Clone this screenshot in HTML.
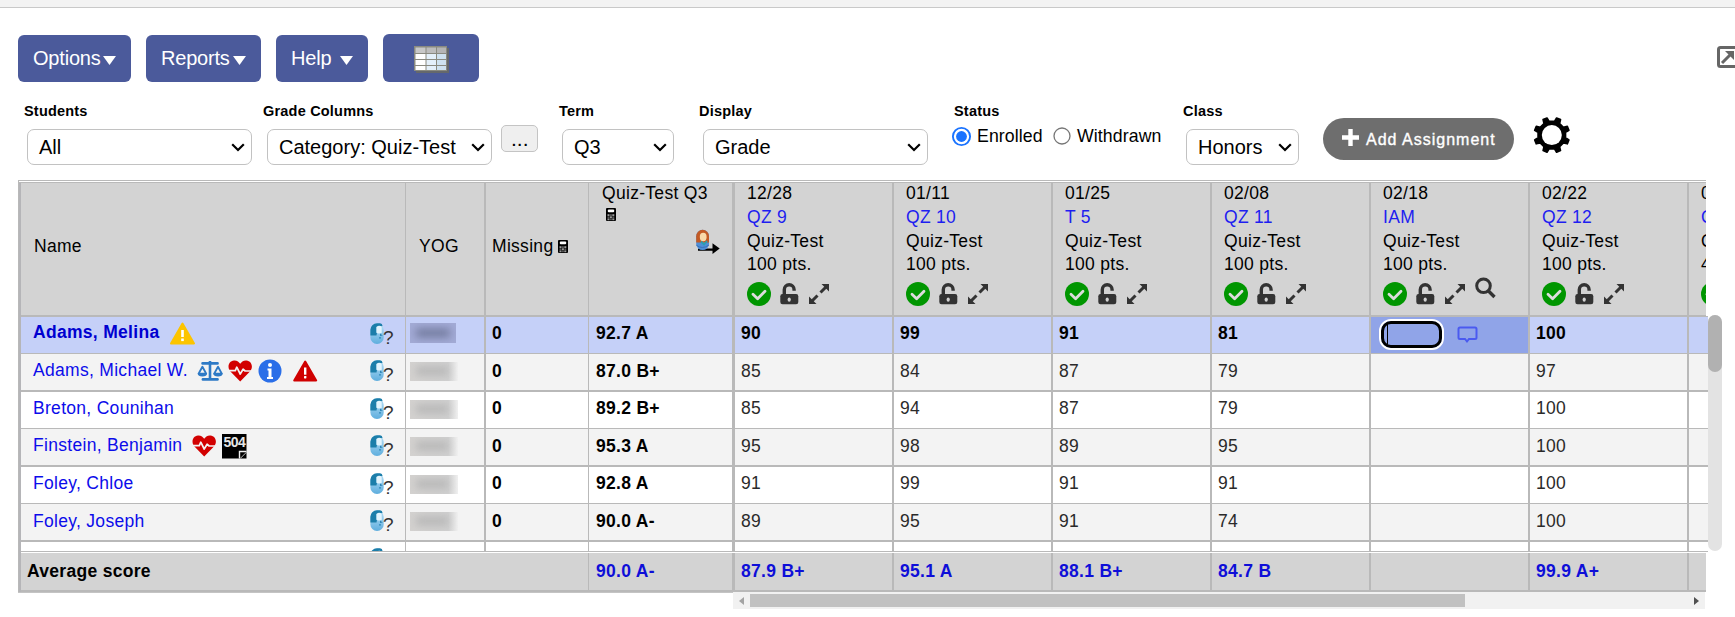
<!DOCTYPE html>
<html><head><meta charset="utf-8"><style>
html,body{margin:0;padding:0;background:#fff;width:1735px;height:617px;overflow:hidden;position:relative;font-family:"Liberation Sans", sans-serif;}
</style></head><body>
<div style="position:absolute;left:0;top:0;width:1735px;height:617px;overflow:hidden">
<div style="position:absolute;left:0px;top:0px;width:1735px;height:7px;background:#f3f3f3"></div><div style="position:absolute;left:0px;top:7px;width:1735px;height:1px;background:#c9c9c9"></div><div style="position:absolute;left:18px;top:35px;width:113px;height:47px;background:#4b5a9b;border-radius:6px"></div><div style="position:absolute;left:146px;top:35px;width:115px;height:47px;background:#4b5a9b;border-radius:6px"></div><div style="position:absolute;left:276px;top:35px;width:92px;height:47px;background:#4b5a9b;border-radius:6px"></div><div style="position:absolute;left:383px;top:34px;width:96px;height:48px;background:#4b5a9b;border-radius:6px"></div><div style="position:absolute;left:33px;top:48.00px;font-size:20px;line-height:20px;font-weight:normal;color:#fff;white-space:nowrap;letter-spacing:-0.2px">Options</div><svg style="position:absolute;left:103px;top:56px" width="13" height="9" viewBox="0 0 13 9"><path d="M0 0 L13 0 L6.5 9 Z" fill="#fff"/></svg><div style="position:absolute;left:161px;top:48.00px;font-size:20px;line-height:20px;font-weight:normal;color:#fff;white-space:nowrap;letter-spacing:-0.2px">Reports</div><svg style="position:absolute;left:233px;top:56px" width="13" height="9" viewBox="0 0 13 9"><path d="M0 0 L13 0 L6.5 9 Z" fill="#fff"/></svg><div style="position:absolute;left:291px;top:48.00px;font-size:20px;line-height:20px;font-weight:normal;color:#fff;white-space:nowrap;letter-spacing:-0.2px">Help</div><svg style="position:absolute;left:340px;top:56px" width="13" height="9" viewBox="0 0 13 9"><path d="M0 0 L13 0 L6.5 9 Z" fill="#fff"/></svg><svg style="position:absolute;left:414px;top:46px" width="36" height="28" viewBox="0 0 36 28"><rect x="2" y="2" width="33" height="25" fill="#6b6b60" opacity="0.8"/><rect x="0" y="0" width="33" height="25" fill="#8a8a80"/><rect x="1.5" y="1.5" width="10" height="5.5" fill="#c8c8c8"/><rect x="12.5" y="1.5" width="9.5" height="5.5" fill="#bdbdbd"/><rect x="23" y="1.5" width="9" height="5.5" fill="#b5b5b5"/><rect x="1.5" y="8" width="10" height="5" fill="#ffffff"/><rect x="12.5" y="8" width="9.5" height="5" fill="#e4f0fa"/><rect x="23" y="8" width="9" height="5" fill="#cfe2f0"/><rect x="1.5" y="14" width="10" height="5" fill="#ffffff"/><rect x="12.5" y="14" width="9.5" height="5" fill="#e4f0fa"/><rect x="23" y="14" width="9" height="5" fill="#cfe2f0"/><rect x="1.5" y="20" width="10" height="4" fill="#ffffff"/><rect x="12.5" y="20" width="9.5" height="4" fill="#e4f0fa"/><rect x="23" y="20" width="9" height="4" fill="#cfe2f0"/></svg><svg style="position:absolute;left:1717px;top:46px" width="18" height="23" viewBox="0 0 18 23"><rect x="1.5" y="1.5" width="22" height="19" rx="2" fill="none" stroke="#666" stroke-width="3"/><path d="M5 17 L14 8" stroke="#666" stroke-width="3"/><path d="M8 5 L17 5 L17 14 Z" fill="#666"/></svg><div style="position:absolute;left:24px;top:104.00px;font-size:14.5px;line-height:14.5px;font-weight:bold;color:#000;white-space:nowrap;letter-spacing:0.2px">Students</div><div style="position:absolute;left:263px;top:104.00px;font-size:14.5px;line-height:14.5px;font-weight:bold;color:#000;white-space:nowrap;letter-spacing:0.2px">Grade Columns</div><div style="position:absolute;left:559px;top:104.00px;font-size:14.5px;line-height:14.5px;font-weight:bold;color:#000;white-space:nowrap;letter-spacing:0.2px">Term</div><div style="position:absolute;left:699px;top:104.00px;font-size:14.5px;line-height:14.5px;font-weight:bold;color:#000;white-space:nowrap;letter-spacing:0.2px">Display</div><div style="position:absolute;left:954px;top:104.00px;font-size:14.5px;line-height:14.5px;font-weight:bold;color:#000;white-space:nowrap;letter-spacing:0.2px">Status</div><div style="position:absolute;left:1183px;top:104.00px;font-size:14.5px;line-height:14.5px;font-weight:bold;color:#000;white-space:nowrap;letter-spacing:0.2px">Class</div><div style="position:absolute;left:27px;top:129px;width:225px;height:36px;box-sizing:border-box;border:1px solid #c2c2c2;border-radius:7px;background:#fff"></div><div style="position:absolute;left:39px;top:137.00px;font-size:20px;line-height:20px;font-weight:normal;color:#000;white-space:nowrap;">All</div><svg style="position:absolute;left:231px;top:143px" width="14" height="9" viewBox="0 0 14 9"><path d="M1.2 1.2 L7 7 L12.8 1.2" fill="none" stroke="#000" stroke-width="2.2"/></svg><div style="position:absolute;left:267px;top:129px;width:225px;height:36px;box-sizing:border-box;border:1px solid #c2c2c2;border-radius:7px;background:#fff"></div><div style="position:absolute;left:279px;top:137.00px;font-size:20px;line-height:20px;font-weight:normal;color:#000;white-space:nowrap;">Category: Quiz-Test</div><svg style="position:absolute;left:471px;top:143px" width="14" height="9" viewBox="0 0 14 9"><path d="M1.2 1.2 L7 7 L12.8 1.2" fill="none" stroke="#000" stroke-width="2.2"/></svg><div style="position:absolute;left:562px;top:129px;width:112px;height:36px;box-sizing:border-box;border:1px solid #c2c2c2;border-radius:7px;background:#fff"></div><div style="position:absolute;left:574px;top:137.00px;font-size:20px;line-height:20px;font-weight:normal;color:#000;white-space:nowrap;">Q3</div><svg style="position:absolute;left:653px;top:143px" width="14" height="9" viewBox="0 0 14 9"><path d="M1.2 1.2 L7 7 L12.8 1.2" fill="none" stroke="#000" stroke-width="2.2"/></svg><div style="position:absolute;left:703px;top:129px;width:225px;height:36px;box-sizing:border-box;border:1px solid #c2c2c2;border-radius:7px;background:#fff"></div><div style="position:absolute;left:715px;top:137.00px;font-size:20px;line-height:20px;font-weight:normal;color:#000;white-space:nowrap;">Grade</div><svg style="position:absolute;left:907px;top:143px" width="14" height="9" viewBox="0 0 14 9"><path d="M1.2 1.2 L7 7 L12.8 1.2" fill="none" stroke="#000" stroke-width="2.2"/></svg><div style="position:absolute;left:1186px;top:129px;width:113px;height:36px;box-sizing:border-box;border:1px solid #c2c2c2;border-radius:7px;background:#fff"></div><div style="position:absolute;left:1198px;top:137.00px;font-size:20px;line-height:20px;font-weight:normal;color:#000;white-space:nowrap;">Honors</div><svg style="position:absolute;left:1278px;top:143px" width="14" height="9" viewBox="0 0 14 9"><path d="M1.2 1.2 L7 7 L12.8 1.2" fill="none" stroke="#000" stroke-width="2.2"/></svg><div style="position:absolute;left:501px;top:125px;width:37px;height:27px;box-sizing:border-box;border:1px solid #c4c4c4;border-radius:5px;background:#efefef"></div><div style="position:absolute;left:511px;top:128.00px;font-size:21px;line-height:21px;font-weight:normal;color:#000;white-space:nowrap;">...</div><svg style="position:absolute;left:951px;top:126px" width="21" height="21" viewBox="0 0 21 21"><circle cx="10.5" cy="10.5" r="8.6" fill="#fff" stroke="#1a73ff" stroke-width="1.9"/><circle cx="10.5" cy="10.5" r="5.4" fill="#1a73ff"/></svg><svg style="position:absolute;left:1052px;top:126px" width="20" height="20" viewBox="0 0 20 20"><circle cx="10" cy="10" r="8" fill="#fff" stroke="#767676" stroke-width="1.3"/></svg><div style="position:absolute;left:977px;top:128.00px;font-size:17.7px;line-height:17.7px;font-weight:normal;color:#000;white-space:nowrap;letter-spacing:0.1px">Enrolled</div><div style="position:absolute;left:1077px;top:128.00px;font-size:17.7px;line-height:17.7px;font-weight:normal;color:#000;white-space:nowrap;letter-spacing:0.1px">Withdrawn</div><div style="position:absolute;left:1323px;top:118px;width:191px;height:42px;background:#6e6e6e;border-radius:21px"></div><svg style="position:absolute;left:1341px;top:128px" width="20" height="18" viewBox="0 0 20 18"><path d="M9.5 1 V18 M1 9.5 H18" stroke="#fff" stroke-width="4.4"/></svg><div style="position:absolute;left:1366px;top:132.00px;font-size:16px;line-height:16px;font-weight:normal;color:#fff;white-space:nowrap;letter-spacing:1px;-webkit-text-stroke:0.35px #fff">Add Assignment</div><svg style="position:absolute;left:1532px;top:116px" width="40" height="40" viewBox="0 0 40 40"><path d="M33.54 21.78 L36.94 23.89 L35.31 27.83 L31.41 26.92 L27.62 30.71 L28.53 34.61 L24.59 36.24 L22.48 32.84 L17.12 32.84 L15.01 36.24 L11.07 34.61 L11.98 30.71 L8.19 26.92 L4.29 27.83 L2.66 23.89 L6.06 21.78 L6.06 16.42 L2.66 14.31 L4.29 10.37 L8.19 11.28 L11.98 7.49 L11.07 3.59 L15.01 1.96 L17.12 5.36 L22.48 5.36 L24.59 1.96 L28.53 3.59 L27.62 7.49 L31.41 11.28 L35.31 10.37 L36.94 14.31 L33.54 16.42 Z" fill="#000" stroke="#000" stroke-width="1.6" stroke-linejoin="round"/><circle cx="19.8" cy="19.1" r="10" fill="#fff"/></svg><div style="position:absolute;left:18px;top:180px;width:1688px;height:136px;background:#d3d3d3"></div><div style="position:absolute;left:18px;top:180px;width:1688px;height:1px;background:#b9b9b9"></div><div style="position:absolute;left:19px;top:181px;width:1687px;height:1px;background:#fff"></div><div style="position:absolute;left:18px;top:182px;width:1688px;height:1px;background:#b9b9b9"></div><div style="position:absolute;left:18px;top:315px;width:1690px;height:2px;background:#b9b9b9"></div><div style="position:absolute;left:21px;top:317px;width:1687px;height:36px;background:#c5d0f8"></div><div style="position:absolute;left:21px;top:353px;width:1687px;height:1px;background:#b9b9b9"></div><div style="position:absolute;left:21px;top:354px;width:1687px;height:36px;background:#f3f3f3"></div><div style="position:absolute;left:21px;top:390px;width:1687px;height:2px;background:#b9b9b9"></div><div style="position:absolute;left:21px;top:392px;width:1687px;height:36px;background:#ffffff"></div><div style="position:absolute;left:21px;top:428px;width:1687px;height:1px;background:#b9b9b9"></div><div style="position:absolute;left:21px;top:429px;width:1687px;height:36px;background:#f3f3f3"></div><div style="position:absolute;left:21px;top:465px;width:1687px;height:2px;background:#b9b9b9"></div><div style="position:absolute;left:21px;top:467px;width:1687px;height:36px;background:#ffffff"></div><div style="position:absolute;left:21px;top:503px;width:1687px;height:1px;background:#b9b9b9"></div><div style="position:absolute;left:21px;top:504px;width:1687px;height:36px;background:#f3f3f3"></div><div style="position:absolute;left:21px;top:540px;width:1687px;height:2px;background:#b9b9b9"></div><div style="position:absolute;left:21px;top:542px;width:1687px;height:9px;background:#ffffff"></div><div style="position:absolute;left:1371px;top:317px;width:157px;height:36px;background:#90a4e8"></div><div style="position:absolute;left:18px;top:551px;width:1690px;height:1px;background:#b9b9b9"></div><div style="position:absolute;left:18px;top:552px;width:1688px;height:1px;background:#fff"></div><div style="position:absolute;left:18px;top:553px;width:1688px;height:37px;background:#d3d3d3"></div><div style="position:absolute;left:18px;top:590px;width:1688px;height:2px;background:#b9b9b9"></div><div style="position:absolute;left:18px;top:592px;width:715px;height:1px;background:#c4c4c4"></div><div style="position:absolute;left:405px;top:183px;width:1px;height:368px;background:#b9b9b9"></div><div style="position:absolute;left:484px;top:183px;width:2px;height:368px;background:#b9b9b9"></div><div style="position:absolute;left:588px;top:183px;width:1px;height:368px;background:#b9b9b9"></div><div style="position:absolute;left:732px;top:183px;width:3px;height:368px;background:#b9b9b9"></div><div style="position:absolute;left:892px;top:183px;width:2px;height:368px;background:#b9b9b9"></div><div style="position:absolute;left:1051px;top:183px;width:2px;height:368px;background:#b9b9b9"></div><div style="position:absolute;left:1210px;top:183px;width:2px;height:368px;background:#b9b9b9"></div><div style="position:absolute;left:1369px;top:183px;width:2px;height:368px;background:#b9b9b9"></div><div style="position:absolute;left:1528px;top:183px;width:2px;height:368px;background:#b9b9b9"></div><div style="position:absolute;left:1687px;top:183px;width:2px;height:368px;background:#b9b9b9"></div><div style="position:absolute;left:588px;top:553px;width:1px;height:37px;background:#b9b9b9"></div><div style="position:absolute;left:732px;top:553px;width:3px;height:37px;background:#b9b9b9"></div><div style="position:absolute;left:892px;top:553px;width:2px;height:37px;background:#b9b9b9"></div><div style="position:absolute;left:1051px;top:553px;width:2px;height:37px;background:#b9b9b9"></div><div style="position:absolute;left:1210px;top:553px;width:2px;height:37px;background:#b9b9b9"></div><div style="position:absolute;left:1369px;top:553px;width:2px;height:37px;background:#b9b9b9"></div><div style="position:absolute;left:1528px;top:553px;width:2px;height:37px;background:#b9b9b9"></div><div style="position:absolute;left:1687px;top:553px;width:2px;height:37px;background:#b9b9b9"></div><div style="position:absolute;left:1706px;top:180px;width:2px;height:136px;background:#fff"></div><div style="position:absolute;left:18px;top:180px;width:1px;height:412px;background:#b9b9b9"></div><div style="position:absolute;left:19px;top:183px;width:2px;height:409px;background:#b5b5b8"></div><div style="position:absolute;left:1708px;top:315px;width:14px;height:236px;background:#e3e3e3;border-radius:7px"></div><div style="position:absolute;left:1708px;top:315px;width:14px;height:57px;background:#b1b1b1;border-radius:7px"></div><div style="position:absolute;left:733px;top:592px;width:972px;height:17px;background:#f1f1f1"></div><div style="position:absolute;left:750px;top:594px;width:715px;height:13px;background:#c1c1c1"></div><svg style="position:absolute;left:739px;top:597px" width="5" height="8" viewBox="0 0 5 8"><path d="M5 0 L0 4 L5 8 Z" fill="#a3a3a3"/></svg><svg style="position:absolute;left:1694px;top:597px" width="5" height="8" viewBox="0 0 5 8"><path d="M0 0 L5 4 L0 8 Z" fill="#505050"/></svg><div style="position:absolute;left:34px;top:238.00px;font-size:17.5px;line-height:17.5px;font-weight:normal;color:#000;white-space:nowrap;letter-spacing:0.3px;">Name</div><div style="position:absolute;left:419px;top:238.00px;font-size:17.5px;line-height:17.5px;font-weight:normal;color:#000;white-space:nowrap;letter-spacing:0.3px;">YOG</div><div style="position:absolute;left:492px;top:238.00px;font-size:17.5px;line-height:17.5px;font-weight:normal;color:#000;white-space:nowrap;letter-spacing:0.3px;">Missing</div><svg style="position:absolute;left:558px;top:240px" width="10" height="13" viewBox="0 0 10 13"><rect x="0" y="0" width="10" height="13" rx="1" fill="#000"/><rect x="1.8" y="1.5" width="6.4" height="2.8" rx="1" fill="#fff"/><rect x="1.5" y="6.2" width="2" height="1.8" fill="#9a9a9a"/><rect x="1.5" y="10.4" width="2" height="1.8" fill="#9a9a9a"/><rect x="3.9" y="8.3" width="2" height="1.8" fill="#9a9a9a"/><rect x="6.3" y="6.2" width="2" height="1.8" fill="#9a9a9a"/><rect x="6.3" y="10.4" width="2" height="1.8" fill="#9a9a9a"/><rect x="1.5" y="8.3" width="2" height="1.8" fill="#555"/><rect x="3.9" y="6.2" width="2" height="1.8" fill="#555"/><rect x="3.9" y="10.4" width="2" height="1.8" fill="#555"/><rect x="6.3" y="8.3" width="2" height="1.8" fill="#555"/></svg><div style="position:absolute;left:602px;top:185.00px;font-size:17.5px;line-height:17.5px;font-weight:normal;color:#000;white-space:nowrap;letter-spacing:0.3px;">Quiz-Test Q3</div><svg style="position:absolute;left:606px;top:208px" width="10" height="13" viewBox="0 0 10 13"><rect x="0" y="0" width="10" height="13" rx="1" fill="#000"/><rect x="1.8" y="1.5" width="6.4" height="2.8" rx="1" fill="#fff"/><rect x="1.5" y="6.2" width="2" height="1.8" fill="#9a9a9a"/><rect x="1.5" y="10.4" width="2" height="1.8" fill="#9a9a9a"/><rect x="3.9" y="8.3" width="2" height="1.8" fill="#9a9a9a"/><rect x="6.3" y="6.2" width="2" height="1.8" fill="#9a9a9a"/><rect x="6.3" y="10.4" width="2" height="1.8" fill="#9a9a9a"/><rect x="1.5" y="8.3" width="2" height="1.8" fill="#555"/><rect x="3.9" y="6.2" width="2" height="1.8" fill="#555"/><rect x="3.9" y="10.4" width="2" height="1.8" fill="#555"/><rect x="6.3" y="8.3" width="2" height="1.8" fill="#555"/></svg><svg style="position:absolute;left:690px;top:225px" width="32" height="32" viewBox="0 0 32 32"><path d="M8 23.5 H22.5 V18.2 L29.7 23.5 L22.5 28.9 V25.7 H8 Z" fill="#000"/><rect x="6.2" y="4.8" width="12.8" height="20.3" rx="6.4" fill="#4f8fd6"/><path d="M6.2 11.2 A6.4 6.4 0 0 1 19 11.2 V17.5 H6.2 Z" fill="#c35a24"/><ellipse cx="13.2" cy="12" rx="3.4" ry="4.2" fill="#f9d9a9"/><path d="M11 16.5 L14 19.5 L17 16" stroke="#2aa0b0" stroke-width="1.8" fill="none"/><path d="M6.2 20 Q12 25 19 20" stroke="#3a70b8" stroke-width="1" fill="none"/></svg><div style="position:absolute;left:0;top:0;width:1706px;height:617px;overflow:hidden"><div style="position:absolute;left:747px;top:185.00px;font-size:17.5px;line-height:17.5px;font-weight:normal;color:#000;white-space:nowrap;letter-spacing:0.3px;">12/28</div><div style="position:absolute;left:747px;top:209.00px;font-size:17.5px;line-height:17.5px;font-weight:normal;color:#1e1ef0;white-space:nowrap;letter-spacing:0.3px;">QZ 9</div><div style="position:absolute;left:747px;top:233.00px;font-size:17.5px;line-height:17.5px;font-weight:normal;color:#000;white-space:nowrap;letter-spacing:0.3px;">Quiz-Test</div><div style="position:absolute;left:747px;top:256.00px;font-size:17.5px;line-height:17.5px;font-weight:normal;color:#000;white-space:nowrap;letter-spacing:0.3px;">100 pts.</div><svg style="position:absolute;left:747px;top:282px" width="24" height="24" viewBox="0 0 24 24"><circle cx="12" cy="12" r="12" fill="#009600"/><path d="M6 12.3 L10.6 16.8 L18 9.3" fill="none" stroke="#dcdcdc" stroke-width="2.8" stroke-linecap="round" stroke-linejoin="round"/></svg><svg style="position:absolute;left:780px;top:283px" width="19" height="22" viewBox="0 0 19 22"><path d="M4.3 12 V6.7 A4.9 4.9 0 0 1 14.1 6.7 V7.8" fill="none" stroke="#333" stroke-width="3.4"/><rect x="0.3" y="11" width="18" height="10.3" rx="2.2" fill="#333"/><ellipse cx="9.2" cy="16.6" rx="1.6" ry="2.2" fill="#d3d3d3"/></svg><svg style="position:absolute;left:808px;top:283px" width="22" height="22" viewBox="0 0 22 22"><path d="M13.5 1 H21 V8.5 Z" fill="#333"/><path d="M1 13.5 V21 H8.5 Z" fill="#333"/><path d="M4 18 L9.5 12.5 M12.5 9.5 L18 4" stroke="#333" stroke-width="3"/></svg><div style="position:absolute;left:906px;top:185.00px;font-size:17.5px;line-height:17.5px;font-weight:normal;color:#000;white-space:nowrap;letter-spacing:0.3px;">01/11</div><div style="position:absolute;left:906px;top:209.00px;font-size:17.5px;line-height:17.5px;font-weight:normal;color:#1e1ef0;white-space:nowrap;letter-spacing:0.3px;">QZ 10</div><div style="position:absolute;left:906px;top:233.00px;font-size:17.5px;line-height:17.5px;font-weight:normal;color:#000;white-space:nowrap;letter-spacing:0.3px;">Quiz-Test</div><div style="position:absolute;left:906px;top:256.00px;font-size:17.5px;line-height:17.5px;font-weight:normal;color:#000;white-space:nowrap;letter-spacing:0.3px;">100 pts.</div><svg style="position:absolute;left:906px;top:282px" width="24" height="24" viewBox="0 0 24 24"><circle cx="12" cy="12" r="12" fill="#009600"/><path d="M6 12.3 L10.6 16.8 L18 9.3" fill="none" stroke="#dcdcdc" stroke-width="2.8" stroke-linecap="round" stroke-linejoin="round"/></svg><svg style="position:absolute;left:939px;top:283px" width="19" height="22" viewBox="0 0 19 22"><path d="M4.3 12 V6.7 A4.9 4.9 0 0 1 14.1 6.7 V7.8" fill="none" stroke="#333" stroke-width="3.4"/><rect x="0.3" y="11" width="18" height="10.3" rx="2.2" fill="#333"/><ellipse cx="9.2" cy="16.6" rx="1.6" ry="2.2" fill="#d3d3d3"/></svg><svg style="position:absolute;left:967px;top:283px" width="22" height="22" viewBox="0 0 22 22"><path d="M13.5 1 H21 V8.5 Z" fill="#333"/><path d="M1 13.5 V21 H8.5 Z" fill="#333"/><path d="M4 18 L9.5 12.5 M12.5 9.5 L18 4" stroke="#333" stroke-width="3"/></svg><div style="position:absolute;left:1065px;top:185.00px;font-size:17.5px;line-height:17.5px;font-weight:normal;color:#000;white-space:nowrap;letter-spacing:0.3px;">01/25</div><div style="position:absolute;left:1065px;top:209.00px;font-size:17.5px;line-height:17.5px;font-weight:normal;color:#1e1ef0;white-space:nowrap;letter-spacing:0.3px;">T 5</div><div style="position:absolute;left:1065px;top:233.00px;font-size:17.5px;line-height:17.5px;font-weight:normal;color:#000;white-space:nowrap;letter-spacing:0.3px;">Quiz-Test</div><div style="position:absolute;left:1065px;top:256.00px;font-size:17.5px;line-height:17.5px;font-weight:normal;color:#000;white-space:nowrap;letter-spacing:0.3px;">100 pts.</div><svg style="position:absolute;left:1065px;top:282px" width="24" height="24" viewBox="0 0 24 24"><circle cx="12" cy="12" r="12" fill="#009600"/><path d="M6 12.3 L10.6 16.8 L18 9.3" fill="none" stroke="#dcdcdc" stroke-width="2.8" stroke-linecap="round" stroke-linejoin="round"/></svg><svg style="position:absolute;left:1098px;top:283px" width="19" height="22" viewBox="0 0 19 22"><path d="M4.3 12 V6.7 A4.9 4.9 0 0 1 14.1 6.7 V7.8" fill="none" stroke="#333" stroke-width="3.4"/><rect x="0.3" y="11" width="18" height="10.3" rx="2.2" fill="#333"/><ellipse cx="9.2" cy="16.6" rx="1.6" ry="2.2" fill="#d3d3d3"/></svg><svg style="position:absolute;left:1126px;top:283px" width="22" height="22" viewBox="0 0 22 22"><path d="M13.5 1 H21 V8.5 Z" fill="#333"/><path d="M1 13.5 V21 H8.5 Z" fill="#333"/><path d="M4 18 L9.5 12.5 M12.5 9.5 L18 4" stroke="#333" stroke-width="3"/></svg><div style="position:absolute;left:1224px;top:185.00px;font-size:17.5px;line-height:17.5px;font-weight:normal;color:#000;white-space:nowrap;letter-spacing:0.3px;">02/08</div><div style="position:absolute;left:1224px;top:209.00px;font-size:17.5px;line-height:17.5px;font-weight:normal;color:#1e1ef0;white-space:nowrap;letter-spacing:0.3px;">QZ 11</div><div style="position:absolute;left:1224px;top:233.00px;font-size:17.5px;line-height:17.5px;font-weight:normal;color:#000;white-space:nowrap;letter-spacing:0.3px;">Quiz-Test</div><div style="position:absolute;left:1224px;top:256.00px;font-size:17.5px;line-height:17.5px;font-weight:normal;color:#000;white-space:nowrap;letter-spacing:0.3px;">100 pts.</div><svg style="position:absolute;left:1224px;top:282px" width="24" height="24" viewBox="0 0 24 24"><circle cx="12" cy="12" r="12" fill="#009600"/><path d="M6 12.3 L10.6 16.8 L18 9.3" fill="none" stroke="#dcdcdc" stroke-width="2.8" stroke-linecap="round" stroke-linejoin="round"/></svg><svg style="position:absolute;left:1257px;top:283px" width="19" height="22" viewBox="0 0 19 22"><path d="M4.3 12 V6.7 A4.9 4.9 0 0 1 14.1 6.7 V7.8" fill="none" stroke="#333" stroke-width="3.4"/><rect x="0.3" y="11" width="18" height="10.3" rx="2.2" fill="#333"/><ellipse cx="9.2" cy="16.6" rx="1.6" ry="2.2" fill="#d3d3d3"/></svg><svg style="position:absolute;left:1285px;top:283px" width="22" height="22" viewBox="0 0 22 22"><path d="M13.5 1 H21 V8.5 Z" fill="#333"/><path d="M1 13.5 V21 H8.5 Z" fill="#333"/><path d="M4 18 L9.5 12.5 M12.5 9.5 L18 4" stroke="#333" stroke-width="3"/></svg><div style="position:absolute;left:1383px;top:185.00px;font-size:17.5px;line-height:17.5px;font-weight:normal;color:#000;white-space:nowrap;letter-spacing:0.3px;">02/18</div><div style="position:absolute;left:1383px;top:209.00px;font-size:17.5px;line-height:17.5px;font-weight:normal;color:#1e1ef0;white-space:nowrap;letter-spacing:0.3px;">IAM</div><div style="position:absolute;left:1383px;top:233.00px;font-size:17.5px;line-height:17.5px;font-weight:normal;color:#000;white-space:nowrap;letter-spacing:0.3px;">Quiz-Test</div><div style="position:absolute;left:1383px;top:256.00px;font-size:17.5px;line-height:17.5px;font-weight:normal;color:#000;white-space:nowrap;letter-spacing:0.3px;">100 pts.</div><svg style="position:absolute;left:1383px;top:282px" width="24" height="24" viewBox="0 0 24 24"><circle cx="12" cy="12" r="12" fill="#009600"/><path d="M6 12.3 L10.6 16.8 L18 9.3" fill="none" stroke="#dcdcdc" stroke-width="2.8" stroke-linecap="round" stroke-linejoin="round"/></svg><svg style="position:absolute;left:1416px;top:283px" width="19" height="22" viewBox="0 0 19 22"><path d="M4.3 12 V6.7 A4.9 4.9 0 0 1 14.1 6.7 V7.8" fill="none" stroke="#333" stroke-width="3.4"/><rect x="0.3" y="11" width="18" height="10.3" rx="2.2" fill="#333"/><ellipse cx="9.2" cy="16.6" rx="1.6" ry="2.2" fill="#d3d3d3"/></svg><svg style="position:absolute;left:1444px;top:283px" width="22" height="22" viewBox="0 0 22 22"><path d="M13.5 1 H21 V8.5 Z" fill="#333"/><path d="M1 13.5 V21 H8.5 Z" fill="#333"/><path d="M4 18 L9.5 12.5 M12.5 9.5 L18 4" stroke="#333" stroke-width="3"/></svg><svg style="position:absolute;left:1475px;top:277px" width="22" height="22" viewBox="0 0 22 22"><circle cx="8.5" cy="8.8" r="6.8" fill="none" stroke="#333" stroke-width="3"/><path d="M13.5 14 L19.5 20" stroke="#333" stroke-width="3.3"/></svg><div style="position:absolute;left:1542px;top:185.00px;font-size:17.5px;line-height:17.5px;font-weight:normal;color:#000;white-space:nowrap;letter-spacing:0.3px;">02/22</div><div style="position:absolute;left:1542px;top:209.00px;font-size:17.5px;line-height:17.5px;font-weight:normal;color:#1e1ef0;white-space:nowrap;letter-spacing:0.3px;">QZ 12</div><div style="position:absolute;left:1542px;top:233.00px;font-size:17.5px;line-height:17.5px;font-weight:normal;color:#000;white-space:nowrap;letter-spacing:0.3px;">Quiz-Test</div><div style="position:absolute;left:1542px;top:256.00px;font-size:17.5px;line-height:17.5px;font-weight:normal;color:#000;white-space:nowrap;letter-spacing:0.3px;">100 pts.</div><svg style="position:absolute;left:1542px;top:282px" width="24" height="24" viewBox="0 0 24 24"><circle cx="12" cy="12" r="12" fill="#009600"/><path d="M6 12.3 L10.6 16.8 L18 9.3" fill="none" stroke="#dcdcdc" stroke-width="2.8" stroke-linecap="round" stroke-linejoin="round"/></svg><svg style="position:absolute;left:1575px;top:283px" width="19" height="22" viewBox="0 0 19 22"><path d="M4.3 12 V6.7 A4.9 4.9 0 0 1 14.1 6.7 V7.8" fill="none" stroke="#333" stroke-width="3.4"/><rect x="0.3" y="11" width="18" height="10.3" rx="2.2" fill="#333"/><ellipse cx="9.2" cy="16.6" rx="1.6" ry="2.2" fill="#d3d3d3"/></svg><svg style="position:absolute;left:1603px;top:283px" width="22" height="22" viewBox="0 0 22 22"><path d="M13.5 1 H21 V8.5 Z" fill="#333"/><path d="M1 13.5 V21 H8.5 Z" fill="#333"/><path d="M4 18 L9.5 12.5 M12.5 9.5 L18 4" stroke="#333" stroke-width="3"/></svg><div style="position:absolute;left:1701px;top:185.00px;font-size:17.5px;line-height:17.5px;font-weight:normal;color:#000;white-space:nowrap;letter-spacing:0.3px;">03/01</div><div style="position:absolute;left:1701px;top:209.00px;font-size:17.5px;line-height:17.5px;font-weight:normal;color:#1e1ef0;white-space:nowrap;letter-spacing:0.3px;">QZ 13</div><div style="position:absolute;left:1701px;top:233.00px;font-size:17.5px;line-height:17.5px;font-weight:normal;color:#000;white-space:nowrap;letter-spacing:0.3px;">Quiz-Test</div><div style="position:absolute;left:1701px;top:256.00px;font-size:17.5px;line-height:17.5px;font-weight:normal;color:#000;white-space:nowrap;letter-spacing:0.3px;">40 pts.</div><svg style="position:absolute;left:1701px;top:282px" width="24" height="24" viewBox="0 0 24 24"><circle cx="12" cy="12" r="12" fill="#009600"/><path d="M6 12.3 L10.6 16.8 L18 9.3" fill="none" stroke="#dcdcdc" stroke-width="2.8" stroke-linecap="round" stroke-linejoin="round"/></svg><svg style="position:absolute;left:1734px;top:283px" width="19" height="22" viewBox="0 0 19 22"><path d="M4.3 12 V6.7 A4.9 4.9 0 0 1 14.1 6.7 V7.8" fill="none" stroke="#333" stroke-width="3.4"/><rect x="0.3" y="11" width="18" height="10.3" rx="2.2" fill="#333"/><ellipse cx="9.2" cy="16.6" rx="1.6" ry="2.2" fill="#d3d3d3"/></svg><svg style="position:absolute;left:1762px;top:283px" width="22" height="22" viewBox="0 0 22 22"><path d="M13.5 1 H21 V8.5 Z" fill="#333"/><path d="M1 13.5 V21 H8.5 Z" fill="#333"/><path d="M4 18 L9.5 12.5 M12.5 9.5 L18 4" stroke="#333" stroke-width="3"/></svg></div><div style="position:absolute;left:0;top:0;width:1706px;height:551px;overflow:hidden"><svg style="position:absolute;left:369px;top:548px" width="26" height="24" viewBox="0 0 26 24"><defs><linearGradient id="sqg1" x1="0" y1="0" x2="0" y2="1"><stop offset="0" stop-color="#b9e0f6"/><stop offset="1" stop-color="#5faede"/></linearGradient></defs><rect x="1.4" y="0.2" width="13.3" height="20.8" rx="6.6" fill="url(#sqg1)"/><path d="M1.4 6.8 A6.6 6.6 0 0 1 8 0.2 H11 Q13.5 0.5 13.5 3 L9 4 L7.5 12.5 H1.4 Z" fill="#1c7eaa"/><path d="M7.3 4 Q10 1.8 12.6 3.6 L12.8 9.8 Q10 11 7.3 9.8 Z" fill="#e2f4fd"/><path d="M11 10.5 L13.8 12.5 L11 13 Z" fill="#2b84b5"/><circle cx="11" cy="14.8" r="0.9" fill="#2b84b5"/></svg><div style="position:absolute;left:383px;top:553px;font-size:19px;line-height:19px;color:#333">?</div><div style="position:absolute;left:33px;top:324.00px;font-size:17.5px;line-height:17.5px;font-weight:bold;color:#0000d0;white-space:nowrap;letter-spacing:0.3px;">Adams, Melina</div><svg style="position:absolute;left:369px;top:323px" width="26" height="24" viewBox="0 0 26 24"><defs><linearGradient id="sqg2" x1="0" y1="0" x2="0" y2="1"><stop offset="0" stop-color="#b9e0f6"/><stop offset="1" stop-color="#5faede"/></linearGradient></defs><rect x="1.4" y="0.2" width="13.3" height="20.8" rx="6.6" fill="url(#sqg2)"/><path d="M1.4 6.8 A6.6 6.6 0 0 1 8 0.2 H11 Q13.5 0.5 13.5 3 L9 4 L7.5 12.5 H1.4 Z" fill="#1c7eaa"/><path d="M7.3 4 Q10 1.8 12.6 3.6 L12.8 9.8 Q10 11 7.3 9.8 Z" fill="#e2f4fd"/><path d="M11 10.5 L13.8 12.5 L11 13 Z" fill="#2b84b5"/><circle cx="11" cy="14.8" r="0.9" fill="#2b84b5"/></svg><div style="position:absolute;left:383px;top:328px;font-size:19px;line-height:19px;color:#333">?</div><div style="position:absolute;left:410px;top:323px;width:46px;height:20px;overflow:hidden;background:#a3abd6"><div style="position:absolute;left:6px;top:6px;width:34px;height:8px;background:#6d7598;filter:blur(4px)"></div></div><div style="position:absolute;left:492px;top:325.00px;font-size:17.5px;line-height:17.5px;font-weight:bold;color:#000;white-space:nowrap;letter-spacing:0.3px;">0</div><div style="position:absolute;left:596px;top:325.00px;font-size:17.5px;line-height:17.5px;font-weight:bold;color:#000;white-space:nowrap;letter-spacing:0.3px;">92.7 A</div><div style="position:absolute;left:741px;top:325.00px;font-size:17.5px;line-height:17.5px;font-weight:bold;color:#000;white-space:nowrap;letter-spacing:0.3px;">90</div><div style="position:absolute;left:900px;top:325.00px;font-size:17.5px;line-height:17.5px;font-weight:bold;color:#000;white-space:nowrap;letter-spacing:0.3px;">99</div><div style="position:absolute;left:1059px;top:325.00px;font-size:17.5px;line-height:17.5px;font-weight:bold;color:#000;white-space:nowrap;letter-spacing:0.3px;">91</div><div style="position:absolute;left:1218px;top:325.00px;font-size:17.5px;line-height:17.5px;font-weight:bold;color:#000;white-space:nowrap;letter-spacing:0.3px;">81</div><div style="position:absolute;left:1536px;top:325.00px;font-size:17.5px;line-height:17.5px;font-weight:bold;color:#000;white-space:nowrap;letter-spacing:0.3px;">100</div><div style="position:absolute;left:33px;top:362.00px;font-size:17.5px;line-height:17.5px;font-weight:normal;color:#0c0cea;white-space:nowrap;letter-spacing:0.3px;">Adams, Michael W.</div><svg style="position:absolute;left:369px;top:360px" width="26" height="24" viewBox="0 0 26 24"><defs><linearGradient id="sqg3" x1="0" y1="0" x2="0" y2="1"><stop offset="0" stop-color="#b9e0f6"/><stop offset="1" stop-color="#5faede"/></linearGradient></defs><rect x="1.4" y="0.2" width="13.3" height="20.8" rx="6.6" fill="url(#sqg3)"/><path d="M1.4 6.8 A6.6 6.6 0 0 1 8 0.2 H11 Q13.5 0.5 13.5 3 L9 4 L7.5 12.5 H1.4 Z" fill="#1c7eaa"/><path d="M7.3 4 Q10 1.8 12.6 3.6 L12.8 9.8 Q10 11 7.3 9.8 Z" fill="#e2f4fd"/><path d="M11 10.5 L13.8 12.5 L11 13 Z" fill="#2b84b5"/><circle cx="11" cy="14.8" r="0.9" fill="#2b84b5"/></svg><div style="position:absolute;left:383px;top:365px;font-size:19px;line-height:19px;color:#333">?</div><div style="position:absolute;left:410px;top:362px;width:48px;height:19px;overflow:hidden;background:linear-gradient(90deg,#d4d2d0,#d0d0d0 80%,#f0f0f0)"><div style="position:absolute;left:6px;top:5px;width:32px;height:8px;background:#b4b4b4;filter:blur(4px)"></div></div><div style="position:absolute;left:492px;top:363.00px;font-size:17.5px;line-height:17.5px;font-weight:bold;color:#000;white-space:nowrap;letter-spacing:0.3px;">0</div><div style="position:absolute;left:596px;top:363.00px;font-size:17.5px;line-height:17.5px;font-weight:bold;color:#000;white-space:nowrap;letter-spacing:0.3px;">87.0 B+</div><div style="position:absolute;left:741px;top:363.00px;font-size:17.5px;line-height:17.5px;font-weight:normal;color:#2a2a2a;white-space:nowrap;letter-spacing:0.3px;">85</div><div style="position:absolute;left:900px;top:363.00px;font-size:17.5px;line-height:17.5px;font-weight:normal;color:#2a2a2a;white-space:nowrap;letter-spacing:0.3px;">84</div><div style="position:absolute;left:1059px;top:363.00px;font-size:17.5px;line-height:17.5px;font-weight:normal;color:#2a2a2a;white-space:nowrap;letter-spacing:0.3px;">87</div><div style="position:absolute;left:1218px;top:363.00px;font-size:17.5px;line-height:17.5px;font-weight:normal;color:#2a2a2a;white-space:nowrap;letter-spacing:0.3px;">79</div><div style="position:absolute;left:1536px;top:363.00px;font-size:17.5px;line-height:17.5px;font-weight:normal;color:#2a2a2a;white-space:nowrap;letter-spacing:0.3px;">97</div><div style="position:absolute;left:33px;top:400.00px;font-size:17.5px;line-height:17.5px;font-weight:normal;color:#0c0cea;white-space:nowrap;letter-spacing:0.3px;">Breton, Counihan</div><svg style="position:absolute;left:369px;top:398px" width="26" height="24" viewBox="0 0 26 24"><defs><linearGradient id="sqg4" x1="0" y1="0" x2="0" y2="1"><stop offset="0" stop-color="#b9e0f6"/><stop offset="1" stop-color="#5faede"/></linearGradient></defs><rect x="1.4" y="0.2" width="13.3" height="20.8" rx="6.6" fill="url(#sqg4)"/><path d="M1.4 6.8 A6.6 6.6 0 0 1 8 0.2 H11 Q13.5 0.5 13.5 3 L9 4 L7.5 12.5 H1.4 Z" fill="#1c7eaa"/><path d="M7.3 4 Q10 1.8 12.6 3.6 L12.8 9.8 Q10 11 7.3 9.8 Z" fill="#e2f4fd"/><path d="M11 10.5 L13.8 12.5 L11 13 Z" fill="#2b84b5"/><circle cx="11" cy="14.8" r="0.9" fill="#2b84b5"/></svg><div style="position:absolute;left:383px;top:403px;font-size:19px;line-height:19px;color:#333">?</div><div style="position:absolute;left:410px;top:400px;width:48px;height:19px;overflow:hidden;background:linear-gradient(90deg,#d4d2d0,#d0d0d0 80%,#f0f0f0)"><div style="position:absolute;left:6px;top:5px;width:32px;height:8px;background:#b4b4b4;filter:blur(4px)"></div></div><div style="position:absolute;left:492px;top:400.00px;font-size:17.5px;line-height:17.5px;font-weight:bold;color:#000;white-space:nowrap;letter-spacing:0.3px;">0</div><div style="position:absolute;left:596px;top:400.00px;font-size:17.5px;line-height:17.5px;font-weight:bold;color:#000;white-space:nowrap;letter-spacing:0.3px;">89.2 B+</div><div style="position:absolute;left:741px;top:400.00px;font-size:17.5px;line-height:17.5px;font-weight:normal;color:#2a2a2a;white-space:nowrap;letter-spacing:0.3px;">85</div><div style="position:absolute;left:900px;top:400.00px;font-size:17.5px;line-height:17.5px;font-weight:normal;color:#2a2a2a;white-space:nowrap;letter-spacing:0.3px;">94</div><div style="position:absolute;left:1059px;top:400.00px;font-size:17.5px;line-height:17.5px;font-weight:normal;color:#2a2a2a;white-space:nowrap;letter-spacing:0.3px;">87</div><div style="position:absolute;left:1218px;top:400.00px;font-size:17.5px;line-height:17.5px;font-weight:normal;color:#2a2a2a;white-space:nowrap;letter-spacing:0.3px;">79</div><div style="position:absolute;left:1536px;top:400.00px;font-size:17.5px;line-height:17.5px;font-weight:normal;color:#2a2a2a;white-space:nowrap;letter-spacing:0.3px;">100</div><div style="position:absolute;left:33px;top:437.00px;font-size:17.5px;line-height:17.5px;font-weight:normal;color:#0c0cea;white-space:nowrap;letter-spacing:0.3px;">Finstein, Benjamin</div><svg style="position:absolute;left:369px;top:435px" width="26" height="24" viewBox="0 0 26 24"><defs><linearGradient id="sqg5" x1="0" y1="0" x2="0" y2="1"><stop offset="0" stop-color="#b9e0f6"/><stop offset="1" stop-color="#5faede"/></linearGradient></defs><rect x="1.4" y="0.2" width="13.3" height="20.8" rx="6.6" fill="url(#sqg5)"/><path d="M1.4 6.8 A6.6 6.6 0 0 1 8 0.2 H11 Q13.5 0.5 13.5 3 L9 4 L7.5 12.5 H1.4 Z" fill="#1c7eaa"/><path d="M7.3 4 Q10 1.8 12.6 3.6 L12.8 9.8 Q10 11 7.3 9.8 Z" fill="#e2f4fd"/><path d="M11 10.5 L13.8 12.5 L11 13 Z" fill="#2b84b5"/><circle cx="11" cy="14.8" r="0.9" fill="#2b84b5"/></svg><div style="position:absolute;left:383px;top:440px;font-size:19px;line-height:19px;color:#333">?</div><div style="position:absolute;left:410px;top:437px;width:48px;height:19px;overflow:hidden;background:linear-gradient(90deg,#d4d2d0,#d0d0d0 80%,#f0f0f0)"><div style="position:absolute;left:6px;top:5px;width:32px;height:8px;background:#b4b4b4;filter:blur(4px)"></div></div><div style="position:absolute;left:492px;top:438.00px;font-size:17.5px;line-height:17.5px;font-weight:bold;color:#000;white-space:nowrap;letter-spacing:0.3px;">0</div><div style="position:absolute;left:596px;top:438.00px;font-size:17.5px;line-height:17.5px;font-weight:bold;color:#000;white-space:nowrap;letter-spacing:0.3px;">95.3 A</div><div style="position:absolute;left:741px;top:438.00px;font-size:17.5px;line-height:17.5px;font-weight:normal;color:#2a2a2a;white-space:nowrap;letter-spacing:0.3px;">95</div><div style="position:absolute;left:900px;top:438.00px;font-size:17.5px;line-height:17.5px;font-weight:normal;color:#2a2a2a;white-space:nowrap;letter-spacing:0.3px;">98</div><div style="position:absolute;left:1059px;top:438.00px;font-size:17.5px;line-height:17.5px;font-weight:normal;color:#2a2a2a;white-space:nowrap;letter-spacing:0.3px;">89</div><div style="position:absolute;left:1218px;top:438.00px;font-size:17.5px;line-height:17.5px;font-weight:normal;color:#2a2a2a;white-space:nowrap;letter-spacing:0.3px;">95</div><div style="position:absolute;left:1536px;top:438.00px;font-size:17.5px;line-height:17.5px;font-weight:normal;color:#2a2a2a;white-space:nowrap;letter-spacing:0.3px;">100</div><div style="position:absolute;left:33px;top:475.00px;font-size:17.5px;line-height:17.5px;font-weight:normal;color:#0c0cea;white-space:nowrap;letter-spacing:0.3px;">Foley, Chloe</div><svg style="position:absolute;left:369px;top:473px" width="26" height="24" viewBox="0 0 26 24"><defs><linearGradient id="sqg6" x1="0" y1="0" x2="0" y2="1"><stop offset="0" stop-color="#b9e0f6"/><stop offset="1" stop-color="#5faede"/></linearGradient></defs><rect x="1.4" y="0.2" width="13.3" height="20.8" rx="6.6" fill="url(#sqg6)"/><path d="M1.4 6.8 A6.6 6.6 0 0 1 8 0.2 H11 Q13.5 0.5 13.5 3 L9 4 L7.5 12.5 H1.4 Z" fill="#1c7eaa"/><path d="M7.3 4 Q10 1.8 12.6 3.6 L12.8 9.8 Q10 11 7.3 9.8 Z" fill="#e2f4fd"/><path d="M11 10.5 L13.8 12.5 L11 13 Z" fill="#2b84b5"/><circle cx="11" cy="14.8" r="0.9" fill="#2b84b5"/></svg><div style="position:absolute;left:383px;top:478px;font-size:19px;line-height:19px;color:#333">?</div><div style="position:absolute;left:410px;top:475px;width:48px;height:19px;overflow:hidden;background:linear-gradient(90deg,#d4d2d0,#d0d0d0 80%,#f0f0f0)"><div style="position:absolute;left:6px;top:5px;width:32px;height:8px;background:#b4b4b4;filter:blur(4px)"></div></div><div style="position:absolute;left:492px;top:475.00px;font-size:17.5px;line-height:17.5px;font-weight:bold;color:#000;white-space:nowrap;letter-spacing:0.3px;">0</div><div style="position:absolute;left:596px;top:475.00px;font-size:17.5px;line-height:17.5px;font-weight:bold;color:#000;white-space:nowrap;letter-spacing:0.3px;">92.8 A</div><div style="position:absolute;left:741px;top:475.00px;font-size:17.5px;line-height:17.5px;font-weight:normal;color:#2a2a2a;white-space:nowrap;letter-spacing:0.3px;">91</div><div style="position:absolute;left:900px;top:475.00px;font-size:17.5px;line-height:17.5px;font-weight:normal;color:#2a2a2a;white-space:nowrap;letter-spacing:0.3px;">99</div><div style="position:absolute;left:1059px;top:475.00px;font-size:17.5px;line-height:17.5px;font-weight:normal;color:#2a2a2a;white-space:nowrap;letter-spacing:0.3px;">91</div><div style="position:absolute;left:1218px;top:475.00px;font-size:17.5px;line-height:17.5px;font-weight:normal;color:#2a2a2a;white-space:nowrap;letter-spacing:0.3px;">91</div><div style="position:absolute;left:1536px;top:475.00px;font-size:17.5px;line-height:17.5px;font-weight:normal;color:#2a2a2a;white-space:nowrap;letter-spacing:0.3px;">100</div><div style="position:absolute;left:33px;top:513.00px;font-size:17.5px;line-height:17.5px;font-weight:normal;color:#0c0cea;white-space:nowrap;letter-spacing:0.3px;">Foley, Joseph</div><svg style="position:absolute;left:369px;top:510px" width="26" height="24" viewBox="0 0 26 24"><defs><linearGradient id="sqg7" x1="0" y1="0" x2="0" y2="1"><stop offset="0" stop-color="#b9e0f6"/><stop offset="1" stop-color="#5faede"/></linearGradient></defs><rect x="1.4" y="0.2" width="13.3" height="20.8" rx="6.6" fill="url(#sqg7)"/><path d="M1.4 6.8 A6.6 6.6 0 0 1 8 0.2 H11 Q13.5 0.5 13.5 3 L9 4 L7.5 12.5 H1.4 Z" fill="#1c7eaa"/><path d="M7.3 4 Q10 1.8 12.6 3.6 L12.8 9.8 Q10 11 7.3 9.8 Z" fill="#e2f4fd"/><path d="M11 10.5 L13.8 12.5 L11 13 Z" fill="#2b84b5"/><circle cx="11" cy="14.8" r="0.9" fill="#2b84b5"/></svg><div style="position:absolute;left:383px;top:515px;font-size:19px;line-height:19px;color:#333">?</div><div style="position:absolute;left:410px;top:512px;width:48px;height:19px;overflow:hidden;background:linear-gradient(90deg,#d4d2d0,#d0d0d0 80%,#f0f0f0)"><div style="position:absolute;left:6px;top:5px;width:32px;height:8px;background:#b4b4b4;filter:blur(4px)"></div></div><div style="position:absolute;left:492px;top:513.00px;font-size:17.5px;line-height:17.5px;font-weight:bold;color:#000;white-space:nowrap;letter-spacing:0.3px;">0</div><div style="position:absolute;left:596px;top:513.00px;font-size:17.5px;line-height:17.5px;font-weight:bold;color:#000;white-space:nowrap;letter-spacing:0.3px;">90.0 A-</div><div style="position:absolute;left:741px;top:513.00px;font-size:17.5px;line-height:17.5px;font-weight:normal;color:#2a2a2a;white-space:nowrap;letter-spacing:0.3px;">89</div><div style="position:absolute;left:900px;top:513.00px;font-size:17.5px;line-height:17.5px;font-weight:normal;color:#2a2a2a;white-space:nowrap;letter-spacing:0.3px;">95</div><div style="position:absolute;left:1059px;top:513.00px;font-size:17.5px;line-height:17.5px;font-weight:normal;color:#2a2a2a;white-space:nowrap;letter-spacing:0.3px;">91</div><div style="position:absolute;left:1218px;top:513.00px;font-size:17.5px;line-height:17.5px;font-weight:normal;color:#2a2a2a;white-space:nowrap;letter-spacing:0.3px;">74</div><div style="position:absolute;left:1536px;top:513.00px;font-size:17.5px;line-height:17.5px;font-weight:normal;color:#2a2a2a;white-space:nowrap;letter-spacing:0.3px;">100</div><svg style="position:absolute;left:170px;top:322px" width="25" height="23" viewBox="0 0 25 23"><path d="M12.5 1.5 L24 21.5 H1 Z" fill="#fcc400" stroke="#fcc400" stroke-width="2" stroke-linejoin="round"/><rect x="11.2" y="8" width="2.6" height="7" fill="#fff"/><rect x="11.2" y="16.5" width="2.6" height="2.6" fill="#fff"/></svg><svg style="position:absolute;left:197px;top:361px" width="26" height="21" viewBox="0 0 26 21"><rect x="4.3" y="0.9" width="17.5" height="2.9" rx="1.2" fill="#2e7ac6"/><circle cx="13" cy="1" r="1.4" fill="#2e7ac6"/><rect x="11.7" y="1" width="2.6" height="17" fill="#2e7ac6"/><rect x="4.6" y="17.1" width="17.2" height="2.7" rx="1.2" fill="#2e7ac6"/><path d="M5.4 5.8 L1.6 12.6 H9.2 Z" fill="none" stroke="#2e7ac6" stroke-width="1.9" stroke-linejoin="round"/><path d="M0.8 12.3 H10 Q10 15.6 5.4 15.6 Q0.8 15.6 0.8 12.3 Z" fill="#2e7ac6"/><path d="M21.0 5.8 L17.2 12.6 H24.799999999999997 Z" fill="none" stroke="#2e7ac6" stroke-width="1.9" stroke-linejoin="round"/><path d="M16.4 12.3 H25.6 Q25.6 15.6 21.0 15.6 Q16.4 15.6 16.4 12.3 Z" fill="#2e7ac6"/></svg><svg style="position:absolute;left:228px;top:360px" width="25" height="23" viewBox="0 0 25 23"><path d="M12.2 21.6 L2.2 11.2 C-1 7.6 0.4 0.8 6 0.4 C9 0.2 11.2 2 12.2 3.8 C13.2 2 15.4 0.2 18.4 0.4 C24 0.8 25.4 7.6 22.2 11.2 Z" fill="#d20000"/><path d="M0 10.6 H7.3 L8.8 7.2 L12.2 14 L15.1 9.2 L17.1 11 H25" fill="none" stroke="#f3f3f3" stroke-width="1.7" stroke-linejoin="round"/></svg><svg style="position:absolute;left:258px;top:359px" width="24" height="24" viewBox="0 0 24 24"><circle cx="12" cy="12" r="11.5" fill="#2a6ee8"/><circle cx="12" cy="6" r="2" fill="#fff"/><path d="M9.5 9.5 H13.5 V18 H15 V20 H9 V18 H10.5 V11.5 H9.5 Z" fill="#fff"/></svg><svg style="position:absolute;left:293px;top:360px" width="25" height="22" viewBox="0 0 25 22"><path d="M12.2 1.5 L23.2 20.5 H1.2 Z" fill="#d00000" stroke="#d00000" stroke-width="2" stroke-linejoin="round"/><rect x="11" y="7.5" width="2.4" height="7.2" fill="#fff"/><rect x="11" y="16" width="2.4" height="2.4" rx="0.6" fill="#fff"/></svg><svg style="position:absolute;left:192px;top:435px" width="25" height="23" viewBox="0 0 25 23"><path d="M12.2 21.6 L2.2 11.2 C-1 7.6 0.4 0.8 6 0.4 C9 0.2 11.2 2 12.2 3.8 C13.2 2 15.4 0.2 18.4 0.4 C24 0.8 25.4 7.6 22.2 11.2 Z" fill="#d20000"/><path d="M0 10.6 H7.3 L8.8 7.2 L12.2 14 L15.1 9.2 L17.1 11 H25" fill="none" stroke="#f3f3f3" stroke-width="1.7" stroke-linejoin="round"/></svg><svg style="position:absolute;left:222px;top:434px" width="25" height="25" viewBox="0 0 25 25"><rect x="0" y="0" width="24.5" height="24.5" fill="#000"/><text x="1.6" y="13.3" font-family="Liberation Sans, sans-serif" font-weight="bold" font-size="14" letter-spacing="-0.6" fill="#e6e6e6">504</text><path d="M17.5 24.5 V17.5 H24.5" fill="none" stroke="#f2f2f2" stroke-width="1.4"/><path d="M18.2 24.5 L24.5 18.2" stroke="#bbb" stroke-width="1"/></svg><div style="position:absolute;left:1379px;top:319px;width:65px;height:31px;box-sizing:border-box;border:2px solid #fff;border-radius:12px"></div><div style="position:absolute;left:1381px;top:321px;width:61px;height:27px;box-sizing:border-box;border:3px solid #000;border-radius:10px"></div><div style="position:absolute;left:1387px;top:324px;width:1px;height:20px;background:#000"></div><svg style="position:absolute;left:1457px;top:326px" width="21" height="18" viewBox="0 0 21 18"><path d="M3 1.5 H18 Q19.5 1.5 19.5 3 V11.5 Q19.5 13 18 13 H12 L10 15.5 L8 13 H3 Q1.5 13 1.5 11.5 V3 Q1.5 1.5 3 1.5 Z" fill="none" stroke="#4a5af0" stroke-width="2"/></svg></div><div style="position:absolute;left:27px;top:563.00px;font-size:17.5px;line-height:17.5px;font-weight:bold;color:#000;white-space:nowrap;letter-spacing:0.3px;">Average score</div><div style="position:absolute;left:596px;top:563.00px;font-size:17.5px;line-height:17.5px;font-weight:bold;color:#0e0ed8;white-space:nowrap;letter-spacing:0.3px;">90.0 A-</div><div style="position:absolute;left:741px;top:563.00px;font-size:17.5px;line-height:17.5px;font-weight:bold;color:#0e0ed8;white-space:nowrap;letter-spacing:0.3px;">87.9 B+</div><div style="position:absolute;left:900px;top:563.00px;font-size:17.5px;line-height:17.5px;font-weight:bold;color:#0e0ed8;white-space:nowrap;letter-spacing:0.3px;">95.1 A</div><div style="position:absolute;left:1059px;top:563.00px;font-size:17.5px;line-height:17.5px;font-weight:bold;color:#0e0ed8;white-space:nowrap;letter-spacing:0.3px;">88.1 B+</div><div style="position:absolute;left:1218px;top:563.00px;font-size:17.5px;line-height:17.5px;font-weight:bold;color:#0e0ed8;white-space:nowrap;letter-spacing:0.3px;">84.7 B</div><div style="position:absolute;left:1536px;top:563.00px;font-size:17.5px;line-height:17.5px;font-weight:bold;color:#0e0ed8;white-space:nowrap;letter-spacing:0.3px;">99.9 A+</div>
</div>
</body></html>
